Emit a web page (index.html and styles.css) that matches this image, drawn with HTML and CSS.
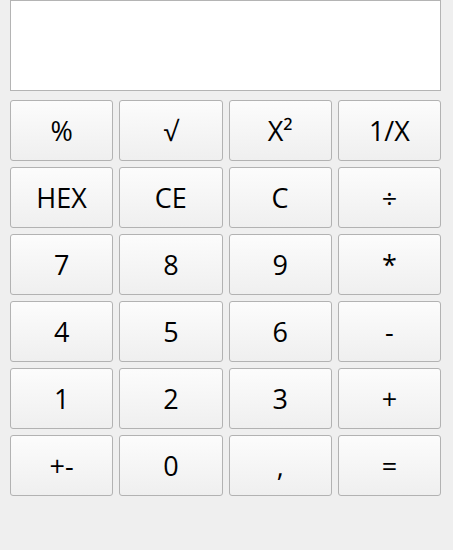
FILE: index.html
```html
<!DOCTYPE html>
<html>
<head>
<meta charset="utf-8">
<link rel="stylesheet" href="styles.css">
</head>
<body>
<div class="calc">
  <div class="display"></div>
  <div class="keys">
    <button class="key">%</button>
    <button class="key">√</button>
    <button class="key">X²</button>
    <button class="key">1/X</button>
    <button class="key">HEX</button>
    <button class="key">CE</button>
    <button class="key">C</button>
    <button class="key">÷</button>
    <button class="key">7</button>
    <button class="key">8</button>
    <button class="key">9</button>
    <button class="key">*</button>
    <button class="key">4</button>
    <button class="key">5</button>
    <button class="key">6</button>
    <button class="key">-</button>
    <button class="key">1</button>
    <button class="key">2</button>
    <button class="key">3</button>
    <button class="key">+</button>
    <button class="key">+-</button>
    <button class="key">0</button>
    <button class="key">,</button>
    <button class="key">=</button>
  </div>
</div>
</body>
</html>
```
FILE: styles.css
```css
html, body {
  margin: 0;
  padding: 0;
  background: #efefef;
  height: 100%;
}
.calc {
  padding: 0 12px 0 10px;
  display: flex;
  flex-direction: column;
  gap: 9px;
}
.display {
  height: 89px;
  background: #ffffff;
  border: 1px solid #b4b4b4;
}
.keys {
  display: grid;
  grid-template-columns: repeat(4, 1fr);
  grid-auto-rows: 61px;
  gap: 6px;
}
.key {
  margin: 0;
  padding: 0;
  border: 1px solid #b2b2b2;
  border-radius: 3px;
  background: linear-gradient(to bottom, #fcfcfc, #efefef);
  font-family: "Open Sans", "Noto Sans", sans-serif;
  font-size: 27px;
  color: #000;
  display: flex;
  align-items: center;
  justify-content: center;
}
```
